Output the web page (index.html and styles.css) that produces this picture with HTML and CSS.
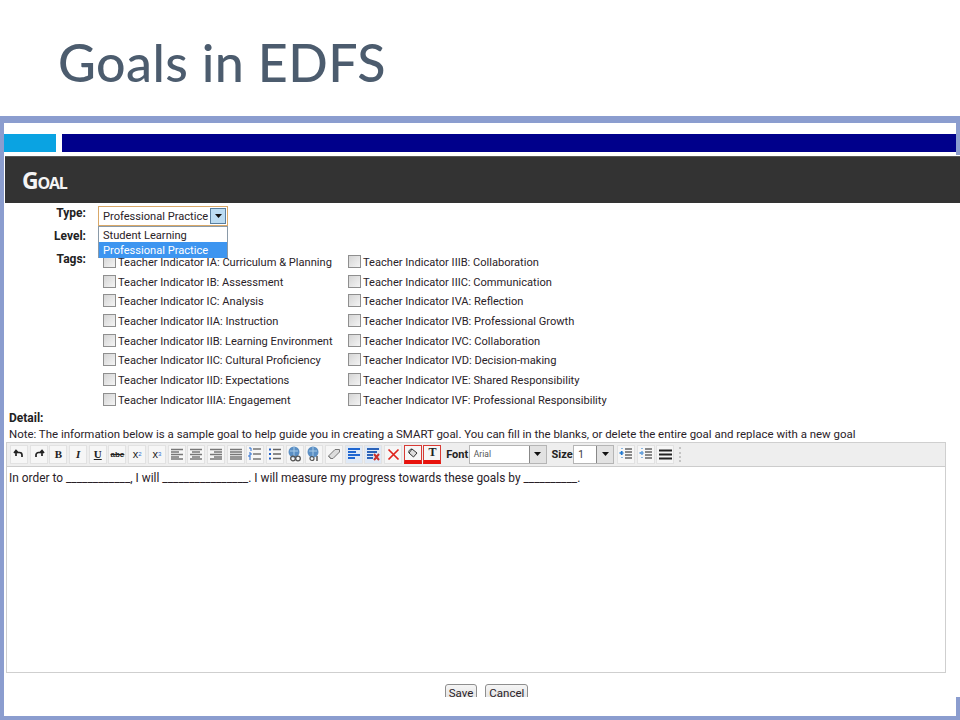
FILE: index.html
```html
<!DOCTYPE html>
<html lang="en">
<head>
<meta charset="utf-8">
<title>Goals in EDFS</title>
<link rel="stylesheet" href="styles.css">
</head>
<body>
<div class="slide">
  <h1 class="title">Goals in EDFS</h1>
  <div class="frame">
    <div class="bars"><div class="bar-cyan"></div><div class="bar-navy"></div></div>
    <div class="shot">
      <div class="goal-head"><span class="goal-title">Goal</span></div>
      <div class="form">
        <div class="lbl lbl-type">Type:</div>
        <div class="select-wrap">
          <div class="select"><span class="select-text">Professional Practice</span><span class="select-arrow"><svg width="7" height="4" viewBox="0 0 7 4"><path d="M0 0h7L3.500 4z" fill="#111"/></svg></span></div>
          <div class="dropdown">
            <div class="opt">Student Learning</div>
            <div class="opt opt-on">Professional Practice</div>
          </div>
        </div>
        <div class="lbl lbl-level">Level:</div>
        <div class="level-val"></div>
        <div class="lbl lbl-tags">Tags:</div>
        <div class="tags">
          <label class="tag"><span class="cb"></span>Teacher Indicator IA: Curriculum &amp; Planning</label>
          <label class="tag"><span class="cb"></span>Teacher Indicator IB: Assessment</label>
          <label class="tag"><span class="cb"></span>Teacher Indicator IC: Analysis</label>
          <label class="tag"><span class="cb"></span>Teacher Indicator IIA: Instruction</label>
          <label class="tag"><span class="cb"></span>Teacher Indicator IIB: Learning Environment</label>
          <label class="tag"><span class="cb"></span>Teacher Indicator IIC: Cultural Proficiency</label>
          <label class="tag"><span class="cb"></span>Teacher Indicator IID: Expectations</label>
          <label class="tag"><span class="cb"></span>Teacher Indicator IIIA: Engagement</label>
          <label class="tag"><span class="cb"></span>Teacher Indicator IIIB: Collaboration</label>
          <label class="tag"><span class="cb"></span>Teacher Indicator IIIC: Communication</label>
          <label class="tag"><span class="cb"></span>Teacher Indicator IVA: Reflection</label>
          <label class="tag"><span class="cb"></span>Teacher Indicator IVB: Professional Growth</label>
          <label class="tag"><span class="cb"></span>Teacher Indicator IVC: Collaboration</label>
          <label class="tag"><span class="cb"></span>Teacher Indicator IVD: Decision-making</label>
          <label class="tag"><span class="cb"></span>Teacher Indicator IVE: Shared Responsibility</label>
          <label class="tag"><span class="cb"></span>Teacher Indicator IVF: Professional Responsibility</label>
        </div>
      </div>
      <div class="detail-lbl">Detail:</div>
      <div class="note">Note: The information below is a sample goal to help guide you in creating a SMART goal. You can fill in the blanks, or delete the entire goal and replace with a new goal</div>
      <div class="editor">
        <div class="toolbar">
          <span class="tb"><svg width="12" height="12" viewBox="0 0 12 12"><path d="M3 8V4.500h3.500a2.500 2.500 0 0 1 2.500 2.500v2M1 5l2-2.500L5.500 5" fill="none" stroke="#222" stroke-width="1.700"/></svg></span>
          <span class="tb"><svg width="12" height="12" viewBox="0 0 12 12"><path d="M3 9V7a2.500 2.500 0 0 1 2.500-2.500H9V8M6.500 5L9 2.500 11 5" fill="none" stroke="#222" stroke-width="1.700"/></svg></span>
          <span class="tb tb-b">B</span>
          <span class="tb tb-i">I</span>
          <span class="tb tb-u">U</span>
          <span class="tb tb-s">abc</span>
          <span class="tb tb-x">x<sub class="sub">2</sub></span>
          <span class="tb tb-x">x<sup class="sup">3</sup></span>
          <span class="tb"><svg width="14" height="12" viewBox="0 0 14 12"><path d="M1 1.500h12M1 4h8M1 6.500h12M1 9h8M1 11h12" stroke="#777" stroke-width="1.700"/></svg></span>
          <span class="tb"><svg width="14" height="12" viewBox="0 0 14 12"><path d="M1 1.500h12M3 4h8M1 6.500h12M3 9h8M1 11h12" stroke="#777" stroke-width="1.700"/></svg></span>
          <span class="tb"><svg width="14" height="12" viewBox="0 0 14 12"><path d="M1 1.500h12M5 4h8M1 6.500h12M5 9h8M1 11h12" stroke="#777" stroke-width="1.700"/></svg></span>
          <span class="tb"><svg width="14" height="12" viewBox="0 0 14 12"><path d="M1 1.500h12M1 4h12M1 6.500h12M1 9h12M1 11h12" stroke="#777" stroke-width="1.700"/></svg></span>
          <span class="tb"><svg width="14" height="14" viewBox="0 0 14 14"><path d="M5 2h8M5 7h8M5 12h8" stroke="#777" stroke-width="1.300"/><path d="M1 1h2v3M1 6h2v2H1v2h2M1 12h2" fill="none" stroke="#2a6fd0"/></svg></span>
          <span class="tb"><svg width="14" height="14" viewBox="0 0 14 14"><path d="M5 2.500h8M5 7h8M5 11.500h8" stroke="#666" stroke-width="1.300"/><path d="M1 1.500h2v2H1zM1 6h2v2H1zM1 10.500h2v2H1z" fill="#1f5fc8"/></svg></span>
          <span class="tb"><svg width="16" height="16" viewBox="0 0 16 16"><circle cx="7" cy="6" r="5.500" fill="#5b8fc4"/><path d="M3 5h8M7 1v10" stroke="#a8cbe8"/><circle cx="6" cy="12.500" r="2.300" fill="none" stroke="#555" stroke-width="1.300"/><circle cx="11" cy="12.500" r="2.300" fill="none" stroke="#555" stroke-width="1.300"/></svg></span>
          <span class="tb"><svg width="16" height="16" viewBox="0 0 16 16"><circle cx="7" cy="6" r="5.500" fill="#5b8fc4"/><path d="M3 5h8M7 1v10" stroke="#a8cbe8"/><circle cx="6" cy="12.500" r="2" fill="none" stroke="#555" stroke-width="1.200"/><path d="M11 10v5" stroke="#555" stroke-width="1.500"/></svg></span>
          <span class="tb"><svg width="14" height="12" viewBox="0 0 14 12"><path d="M1.500 8L8 1.500h4.500V4L6 10.500H3.500z" fill="#ddd" stroke="#777"/><path d="M1.500 8l2.500 2.500" stroke="#777"/></svg></span>
          <span class="tb tb-blue"><svg width="14" height="14" viewBox="0 0 14 14"><path d="M1 2h12M1 5h8M1 8h12M1 11h7" stroke="#1f66d0" stroke-width="1.800"/></svg></span>
          <span class="tb tb-blue"><svg width="14" height="14" viewBox="0 0 14 14"><path d="M1 2h12M1 5h10M1 8h6M1 11h6" stroke="#2a62b8" stroke-width="1.800"/><path d="M8 7l5 6M13 7l-5 6" stroke="#c9302c" stroke-width="2"/></svg></span>
          <span class="tb"><svg width="13" height="13" viewBox="0 0 13 13"><path d="M1.500 1.500l10 10M11.500 1.500l-10 10" stroke="#e0231c" stroke-width="1.700"/></svg></span>
          <span class="tb tb-red"><svg width="12" height="10" viewBox="0 0 12 10"><path d="M5 1l5 4-3.500 4L2 5z" fill="#ddd" stroke="#333"/><path d="M2 5C1 3 3 1 5 1" fill="none" stroke="#333"/></svg></span>
          <span class="tb tb-red tb-t">T</span>
          <span class="tb-label tb-label-font">Font</span>
          <span class="combo combo-font"><span class="combo-text">Arial</span><span class="combo-arrow"><svg width="7" height="4" viewBox="0 0 7 4"><path d="M0 0h7L3.500 4z" fill="#111"/></svg></span></span>
          <span class="tb-label tb-label-size">Size</span>
          <span class="combo combo-size"><span class="combo-text">1</span><span class="combo-arrow"><svg width="7" height="4" viewBox="0 0 7 4"><path d="M0 0h7L3.500 4z" fill="#111"/></svg></span></span>
          <span class="tb tb-first"><svg width="14" height="14" viewBox="0 0 14 14"><path d="M6 2h7M6 5h7M6 8h7M6 11h7" stroke="#666" stroke-width="1.300"/><path d="M0.500 6h4M2.500 4v4" stroke="#1f78d0" stroke-width="1.300"/><path d="M3 1v12" stroke="#1f78d0" stroke-dasharray="1 2"/></svg></span>
          <span class="tb"><svg width="14" height="14" viewBox="0 0 14 14"><path d="M6 2h7M6 5h7M6 8h7M6 11h7" stroke="#666" stroke-width="1.300"/><path d="M0.500 6h4" stroke="#1f78d0" stroke-width="1.300"/><path d="M3 1v12" stroke="#1f78d0" stroke-dasharray="1 2"/></svg></span>
          <span class="tb"><svg width="13" height="11" viewBox="0 0 13 11"><path d="M0 1.500h13M0 5.500h13M0 9.500h13" stroke="#222" stroke-width="1.800"/></svg></span>
          <span class="grip"></span>
        </div>
        <div class="editor-body">In order to ____________, I will ________________. I will measure my progress towards these goals by __________.</div>
      </div>
      <div class="actions">
        <span class="btn">Save</span>
        <span class="btn">Cancel</span>
      </div>
    </div>
  </div>
</div>
</body>
</html>
```

FILE: styles.css
```css
* { box-sizing: border-box; }
html, body { margin: 0; padding: 0; background: #fff; }
body { font-family: Roboto, "Open Sans", sans-serif; color: #2a2228; }
.slide { width: 960px; height: 720px; overflow: hidden; display: flex; flex-direction: column; }
.title {
  height: 116px; margin: 0; padding: 32px 0 0 58px;
  font: 500 52px/60px Lato, "Open Sans", sans-serif;
  color: #4c5c6e; letter-spacing: 0.4px;
}
.frame {
  height: 604px;
  border: solid #8b9dcf; border-width: 7px 4px 4px 4px;
  padding-top: 11px;
  background: #fff;
}
.bars { display: flex; gap: 6px; height: 18px; }
.bar-cyan { width: 52px; background: #0aa3e2; }
.bar-navy { flex: 1; background: #00008b; }
.shot {
  position: relative;
  margin: 3px -4px 0 1px;
  height: 542px;
  padding-top: 1px;
  background: #fff;
  overflow: hidden;
}
.goal-head {
  height: 47px; background: #333333; display: flex; align-items: center; padding-left: 17px;
  border-top: 1px solid #555;
}
.goal-title {
  font: 700 23px/26px "Open Sans", sans-serif; font-variant: small-caps; color: #f4f4f4; letter-spacing: -1.200px;
}
.form {
  display: grid; grid-template-columns: 81px 1fr; column-gap: 12px;
  grid-template-rows: 20px 27px auto; padding-top: 3px;
}
.lbl { font-weight: 700; text-align: right; font-size: 12px; line-height: 16px; color: #222; }
.lbl-type { margin-top: -1px; }
.lbl-level { margin-top: 2px; }
.lbl-tags { margin-top: -2px; }
.select-wrap { position: relative; width: 130px; }
.select {
  height: 20px; display: flex; align-items: center; justify-content: space-between;
  border: 1px solid #d9a868; padding: 1px 1px 0 4px; background: #fff; font-size: 11.100px; color: #2a2228;
}
.select-text { white-space: nowrap; }
.select-arrow {
  width: 16px; height: 16px; margin-top: -1px; display: flex; align-items: center; justify-content: center;
  background: #bcdcf2; border: 1px solid #5a7f9e;
}
.dropdown {
  position: absolute; z-index: 2; top: 20px; left: 0; width: 130px; height: 32px;
  background: #fff; border: 1px solid #8a9aa8; font-size: 11.100px; line-height: 17px;
}
.opt { height: 15px; padding-left: 4px; color: #2a2228; white-space: nowrap; }
.opt-on { height: 16px; background: #3d95f0; color: #fff; }
.tags {
  display: grid; grid-auto-flow: column; grid-template-rows: repeat(8, 19.700px);
  grid-template-columns: 245px auto; justify-content: start; padding-left: 5px;
}
.tag { display: flex; align-items: center; font-size: 11.100px; line-height: 16px; white-space: nowrap; }
.cb {
  width: 13px; height: 13px; margin: -3px 2px 0 0; flex: none;
  border: 1px solid #8f8f8f; background: linear-gradient(135deg, #d5d5d5, #f4f4f4);
}
.detail-lbl { margin: 0 0 0 4px; font-weight: 700; font-size: 12px; line-height: 15px; color: #222; }
.note { margin-left: 4px; font-size: 11.450px; line-height: 16px; white-space: nowrap; color: #2a2228; }
.editor { margin: 0 14px 0 1px; }
.toolbar {
  height: 25px; display: flex; align-items: center; gap: 1.700px; padding-left: 3px;
  background: #eeeeee; border: 1px solid #cfcfcf; border-bottom-color: #ccc;
}
.tb {
  width: 18px; height: 19px; flex: none; display: flex; align-items: center; justify-content: center;
  background: #f6f6f6; border: 1px solid #e2e2e2; color: #222; font-size: 11px;
}
.tb-b { font: 700 11px "Liberation Serif", serif; }
.tb-i { font: italic 700 11px "Liberation Serif", serif; }
.tb-u { font: 700 11px "Liberation Serif", serif; text-decoration: underline; }
.tb-s { font: 700 8px "Liberation Sans", sans-serif; text-decoration: line-through; }
.tb-x { font: 400 11px "Liberation Sans", sans-serif; }
.sub, .sup { font-size: 6px; color: #2a6fd0; line-height: 0; }
.tb-blue { background: #dfe9f6; }
.tb-red { border: 1px solid #d83a34; border-bottom: 4px solid #e8120c; background: #f6f6f6; }
.tb-t { font: 700 12px "Liberation Serif", serif; }
.tb-label { font-weight: 700; font-size: 11px; color: #222; }
.tb-label-font { margin-left: 3px; width: 21px; }
.tb-label-size { margin-left: 3px; width: 20px; }
.combo {
  height: 19px; display: flex; align-items: center; justify-content: space-between; flex: none;
  background: #fff; border: 1px solid #b5b5b5;
}
.combo-font { width: 78px; }
.combo-size { width: 41px; }
.combo-text { padding-left: 4px; font-size: 8.500px; color: #555; }
.combo-size .combo-text { font-size: 10px; color: #333; }
.combo-arrow {
  width: 17px; height: 17px; display: flex; align-items: center; justify-content: center;
  background: #e2e2e2; border-left: 1px solid #888;
}
.tb-first { margin-left: 1px; }
.grip { width: 3px; height: 15px; margin-left: 3px; border-left: 2px dotted #c4c4c4; }
.editor-body {
  height: 206px; padding: 3px 0 0 2px; background: #fff;
  border: 1px solid #cfcfcf; border-top: 0;
  font-size: 11.900px; line-height: 16px; white-space: nowrap; color: #2a2228;
}
.actions { display: flex; justify-content: center; gap: 8px; margin-top: 11px; padding-left: 8px; }
.btn {
  height: 22px; padding: 0 3px; border: 1px solid #8e8e8e; border-radius: 3px;
  background: linear-gradient(#f5f5f5, #dcdcdc); font-size: 11.500px; line-height: 16px; color: #2a2228;
}
```
